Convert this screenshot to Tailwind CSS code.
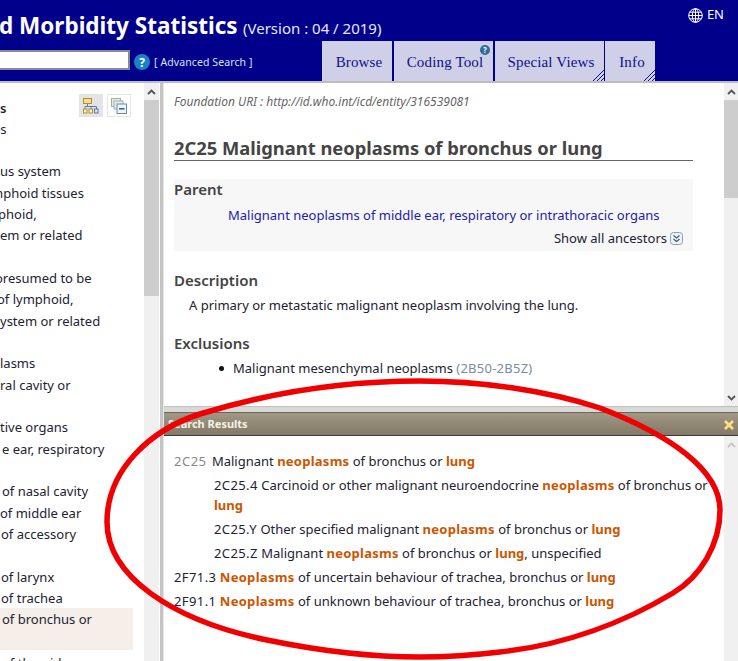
<!DOCTYPE html>
<html lang="en">
<head>
<meta charset="utf-8">
<title>ICD-11 Morbidity Statistics</title>
<script src="https://cdn.jsdelivr.net/npm/@tailwindcss/browser@4"></script>
</head>
<body class="m-0 overflow-hidden bg-white font-['Noto_Sans','Open_Sans',sans-serif] text-[13px] text-[#222233]">
<div class="relative w-[738px] h-[661px] overflow-hidden flex flex-col">

    <!-- header -->
    <header class="h-[81px] bg-[#00008b] flex shrink-0 overflow-hidden">
        <div class="w-[322px] shrink-0">
            <div class="h-[47px] pt-[9px] ml-[-1px] whitespace-nowrap text-white leading-[34px] w-[500px]">
                <span class="text-[22.5px] font-bold">d Morbidity Statistics</span>
                <span class="ml-[2px] text-[15px] text-[#e8e8f4]">(Version : 04 / 2019)</span>
            </div>
            <div class="flex items-start mt-[3px] h-[24px]">
                <div class="w-[130px] h-[20px] bg-white border-y-2 border-r-2 border-[#8a8a8a]"></div>
                <svg class="ml-[4px] mt-[4px]" width="16" height="16" viewBox="0 0 16 16"><circle cx="8" cy="8" r="8" fill="#1b80c4"/><text x="8" y="12.5" text-anchor="middle" font-size="12" font-weight="700" fill="#fff" font-family="Noto Sans">?</text></svg>
                <span class="ml-[4px] mt-[4px] leading-[16px] text-[10.5px] tracking-[0.1px] text-[#d8e0f4]">[ Advanced Search ]</span>
            </div>
        </div>
        <nav class="flex items-end h-full gap-[2px] font-['Liberation_Serif',serif] text-[15px] tracking-[0.15px] text-[#10108a]">
            <div class="w-[70px] h-[40px] bg-[#cfcfe8] flex items-center justify-center pt-[2px] pl-[4px]">Browse</div>
            <div class="relative w-[99px] h-[40px] bg-[#cfcfe8] flex items-center justify-center pt-[2px] pl-[3px]">Coding Tool
                <svg class="absolute right-[3px] top-[4px]" width="10" height="10" viewBox="0 0 10 10"><circle cx="5" cy="5" r="5" fill="#2c6d9e"/><text x="5" y="8" text-anchor="middle" font-size="8" font-weight="700" fill="#fff" font-family="Noto Sans">?</text></svg>
            </div>
            <div class="relative w-[109px] h-[40px] bg-[#cfcfe8] flex items-center justify-center pt-[2px] pl-[3px]">Special Views
                <svg class="absolute right-0 bottom-0" width="12" height="12" viewBox="0 0 12 12" stroke="#10108a" stroke-width="1"><path d="M1 12 12 1M5 12 12 5M9 12 12 9"/></svg>
            </div>
            <div class="relative w-[50px] h-[40px] ml-[-1px] bg-[#cfcfe8] flex items-center justify-center pt-[2px] pl-[4px]">Info
                <svg class="absolute right-0 bottom-0" width="12" height="12" viewBox="0 0 12 12" stroke="#10108a" stroke-width="1"><path d="M1 12 12 1M5 12 12 5M9 12 12 9"/></svg>
            </div>
        </nav>
        <div class="ml-auto mr-[14px] mt-[5px] h-[20px] flex items-center gap-[4px] text-white text-[13px]">
            <svg width="15" height="15" viewBox="0 0 15 15" fill="none" stroke="#fff" stroke-width="1"><circle cx="7.5" cy="7.5" r="6.8"/><ellipse cx="7.5" cy="7.5" rx="3.2" ry="6.8"/><path d="M7.5 .7V14.3M.7 7.5H14.3M1.6 4.2H13.4M1.6 10.8H13.4"/></svg>
            EN
        </div>
    </header>
    <div class="h-[2px] bg-[#bdbdbd] shrink-0"></div>

    <main class="flex flex-1 min-h-0">
        <!-- tree panel -->
        <aside class="relative w-[144px] shrink-0 pt-[14.5px] leading-[21.33px] whitespace-nowrap overflow-hidden">
            <div class="absolute left-[79px] top-[11px] w-[24px] h-[23px] bg-[#e4e4e4] flex items-center justify-center">
                <svg width="16" height="16" viewBox="0 0 16 16" fill="none"><rect x=".5" y=".5" width="8" height="5" fill="#f8de8c" stroke="#b08d2e"/><path d="M4.5 6V8.5M2 11V8.5H13.5V11M8 8.5V11" stroke="#5a7aa8"/><rect x=".5" y="11" width="3.5" height="4" fill="#fff3c8" stroke="#b08d2e"/><rect x="6" y="11" width="3.5" height="4" fill="#fff3c8" stroke="#b08d2e"/><rect x="11.5" y="11" width="3.5" height="4" fill="#dce6f2" stroke="#5a7aa8"/></svg>
            </div>
            <div class="absolute left-[107px] top-[11px] w-[24px] h-[23px] bg-white border border-[#e6e6e6] flex items-center justify-center">
                <svg width="16" height="16" viewBox="0 0 16 16" fill="none"><rect x=".5" y=".5" width="9" height="8" fill="#e6eadb" stroke="#a9ae8e"/><rect x="3" y="3" width="9" height="8" fill="#e3edf3" stroke="#9ab0b8"/><rect x="6" y="6" width="9.5" height="9.5" fill="#eef4fa" stroke="#7089a8"/><path d="M8 10.8H13.5" stroke="#2e4f78" stroke-width="1.4"/></svg>
            </div>
            <div class="font-semibold h-[21.33px]">s</div>
            <div class="h-[21.33px] ml-[-7px]">es</div>
            <div class="h-[21.33px]"></div>
            <div class="h-[21.33px]">us system</div>
            <div class="h-[21.33px] ml-[-9px]">mphoid tissues</div>
            <div class="h-[21.33px] ml-[-2px]">phoid,</div>
            <div class="h-[21.33px]">em or related</div>
            <div class="h-[21.33px]"></div>
            <div class="h-[21.33px] ml-[-5px]">oresumed to be</div>
            <div class="h-[21.33px] ml-[-3px]">of lymphoid,</div>
            <div class="h-[21.33px]">ystem or related</div>
            <div class="h-[21.33px]"></div>
            <div class="h-[21.33px]">lasms</div>
            <div class="h-[21.33px]">ral cavity or</div>
            <div class="h-[21.33px]"></div>
            <div class="h-[21.33px]">tive organs</div>
            <div class="h-[21.33px] pl-[2px]">e ear, respiratory</div>
            <div class="h-[21.33px]"></div>
            <div class="h-[21.33px] pl-[2px]">of nasal cavity</div>
            <div class="h-[21.33px]">of middle ear</div>
            <div class="h-[21.33px] pl-[1px]">of accessory</div>
            <div class="h-[21.33px]"></div>
            <div class="h-[21.33px] pl-[1px]">of larynx</div>
            <div class="h-[21.33px] pl-[1px]">of trachea</div>
            <div class="h-[42.5px] mt-[-1.5px] pt-[1px] pl-[2px] bg-[#f6eee8] w-[133px]">of bronchus or</div>
            <div class="h-[21.33px] pl-[2px] mt-[3px]">of thyroid</div>
        </aside>
        <div class="w-[15px] shrink-0 bg-[#f0f0f0] relative">
            <svg class="mx-auto mt-[6px]" width="9" height="6" viewBox="0 0 9 6" fill="none" stroke="#555" stroke-width="1.8"><path d="M1 5 4.5 1.5 8 5"/></svg>
            <div class="absolute top-[17px] h-[196px] w-full bg-[#cdcdcd]"></div>
        </div>
        <div class="w-[1px] shrink-0"></div>
        <div class="w-[4px] shrink-0 bg-[#c4c4c4] border-r border-[#e6e6e6]"></div>

        <!-- right side -->
        <section class="flex-1 min-w-0 flex flex-col">
            <div class="h-[323px] shrink-0 flex">
                <article class="w-[529px] pl-[10px] shrink-0">
                    <p class="mt-[10px] text-[12px] leading-[18px] italic text-[#666]">Foundation URI : http://id.who.int/icd/entity/316539081</p>
                    <h1 class="mt-[24px] text-[18.35px] leading-[25px] font-bold text-[#444] border-b border-[#666]">2C25 Malignant neoplasms of bronchus or lung</h1>
                    <div class="mt-[18px] h-[72px] bg-[#f7f7f7]">
                        <h2 class="text-[15px] leading-[21px] font-semibold text-[#444]">Parent</h2>
                        <a class="block mt-[4px] ml-[54px] leading-[22px] text-[#2222aa]">Malignant neoplasms of middle ear, respiratory or intrathoracic organs</a>
                        <div class="flex justify-end items-center gap-[3px] pr-[10px] leading-[24px]">Show all ancestors
                            <svg width="13" height="13" viewBox="0 0 13 13" fill="none"><rect x=".5" y=".5" width="12" height="12" rx="3" fill="#eef3f8" stroke="#8aa0b4"/><path d="M3.5 3.5 6.5 6 9.5 3.5M3.5 7 6.5 9.5 9.5 7" stroke="#44586c" stroke-width="1.2"/></svg>
                        </div>
                    </div>
                    <h2 class="mt-[18px] text-[15px] leading-[22px] font-semibold text-[#444]">Description</h2>
                    <p class="mt-[3px] ml-[15px] leading-[22px]">A primary or metastatic malignant neoplasm involving the lung.</p>
                    <h2 class="mt-[16px] text-[15px] leading-[22px] font-semibold text-[#444]">Exclusions</h2>
                    <div class="mt-[3px] ml-[45px] flex items-center leading-[22px]">
                        <span class="w-[5px] h-[5px] rounded-full bg-[#111] mr-[9px]"></span>
                        <span>Malignant mesenchymal neoplasms <span class="text-[#7a8ca0] tracking-[0.25px]">(2B50-2B5Z)</span></span>
                    </div>
                </article>
                <div class="ml-auto w-[14px] bg-[#f0f0f0] relative">
                    <svg class="mx-auto mt-[6px]" width="9" height="6" viewBox="0 0 9 6" fill="none" stroke="#555" stroke-width="1.8"><path d="M1 5 4.5 1.5 8 5"/></svg>
                    <div class="absolute top-[17px] h-[98px] w-full bg-[#cdcdcd]"></div>
                    <svg class="absolute bottom-[5px] left-[3px]" width="9" height="6" viewBox="0 0 9 6" fill="none" stroke="#555" stroke-width="1.8"><path d="M1 1 4.5 4.5 8 1"/></svg>
                </div>
            </div>
            <div class="h-[6px] bg-[#d8d8d8] border-t border-[#c0c0c0] shrink-0"></div>
            <div class="h-[24px] shrink-0 flex items-center justify-between pl-[4px] pr-[4px] pt-[1px] bg-gradient-to-b from-[#a09884] to-[#827a66] border-t border-[#6e6858] border-b border-b-[#3e3a30] text-[11px] font-bold text-[#f4f1e6]">
                <span>Search Results</span>
                <svg width="10" height="10" viewBox="0 0 10 10" stroke="#ffdf80" stroke-width="2.6"><path d="M1 1 9 9M9 1 1 9"/></svg>
            </div>
            <div class="flex-1 flex min-h-0">
                <div class="w-[560px] shrink-0 pl-[10px] pt-[15px] pr-[14px] leading-[20px]">
                    <div class="mb-[4px]"><span class="text-[#888] tracking-[0.5px] mr-[2px]">2C25</span> Malignant <b class="text-[#cc5500] tracking-[0.25px]">neoplasms</b> of bronchus or <b class="text-[#cc5500]">lung</b></div>
                    <div class="mb-[4px] pl-[40px]"><span class="tracking-[0.4px]">2C25.4</span> Carcinoid or other malignant neuroendocrine <b class="text-[#cc5500] tracking-[0.25px]">neoplasms</b> of bronchus or <b class="text-[#cc5500]">lung</b></div>
                    <div class="mb-[4px] pl-[40px]"><span class="tracking-[0.4px]">2C25.Y</span> Other specified malignant <b class="text-[#cc5500] tracking-[0.25px]">neoplasms</b> of bronchus or <b class="text-[#cc5500]">lung</b></div>
                    <div class="mb-[4px] pl-[40px]"><span class="tracking-[0.4px]">2C25.Z</span> Malignant <b class="text-[#cc5500] tracking-[0.25px]">neoplasms</b> of bronchus or <b class="text-[#cc5500]">lung</b>, unspecified</div>
                    <div class="mb-[4px]"><span class="tracking-[0.4px]">2F71.3</span> <b class="text-[#cc5500] tracking-[0.3px]">Neoplasms</b> of uncertain behaviour of trachea, bronchus or <b class="text-[#cc5500]">lung</b></div>
                    <div><span class="tracking-[0.4px]">2F91.1</span> <b class="text-[#cc5500] tracking-[0.3px]">Neoplasms</b> of unknown behaviour of trachea, bronchus or <b class="text-[#cc5500]">lung</b></div>
                </div>
                <div class="ml-auto w-[14px] bg-[#f0f0f0]">
                    <svg class="mx-auto mt-[6px]" width="9" height="6" viewBox="0 0 9 6" fill="none" stroke="#c4c4c4" stroke-width="1.8"><path d="M1 5 4.5 1.5 8 5"/></svg>
                </div>
            </div>
        </section>
    </main>

    <!-- red hand drawn circle -->
    <svg class="absolute inset-0 pointer-events-none" width="738" height="661" viewBox="0 0 738 661" fill="none">
        <path d="M420 381C340 381 265 394 200 414C150 430 107 470 107 522C107 575 170 620 267 640C320 651 370 657 420 657C450 657 475 655 500 652C565 645 625 622 673 593C700 577 720 545 720 510C720 470 670 435 600 408C545 390 480 381 420 381Z" stroke="#f00000" stroke-width="5.5"/>
    </svg>
</div>
</body>
</html>
